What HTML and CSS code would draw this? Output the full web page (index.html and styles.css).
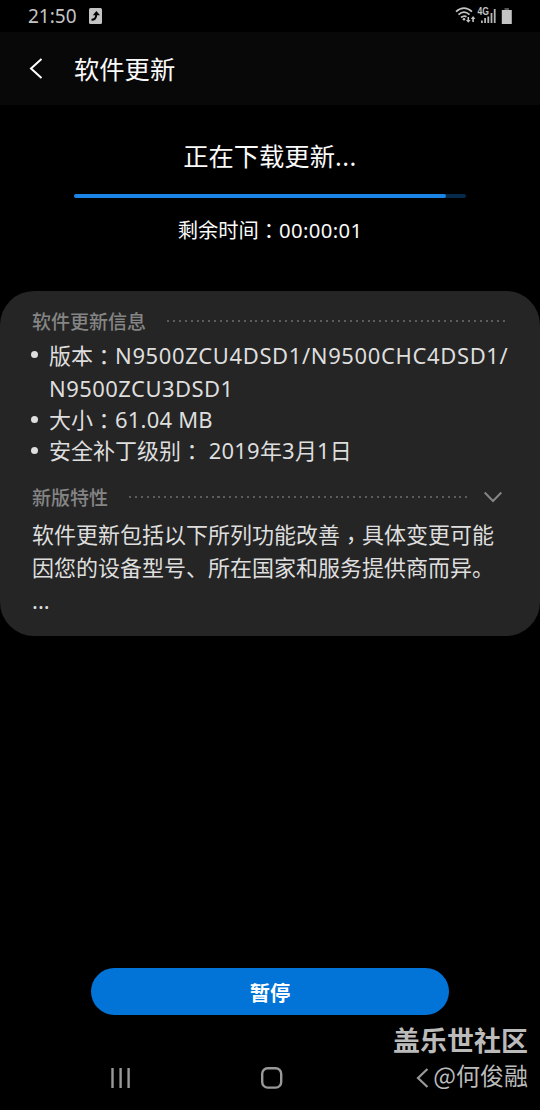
FILE: index.html
```html
<!DOCTYPE html>
<html lang="zh-CN">
<head>
  <meta charset="UTF-8">
  <meta name="viewport" content="width=device-width, initial-scale=1.0">
  <title>软件更新</title>
  <link rel="stylesheet" href="styles.css">
</head>
<body>
  <!-- Status Bar -->
  <div class="status-bar">
    <span class="clock">21:50</span>
    <svg class="update-icon" width="13" height="16" viewBox="0 0 13 16">
      <rect width="13" height="16" rx="1.5" fill="#c4c4c4"/>
      <path d="M2.5 11.8C5.5 11.8 7.2 10 7.2 6.5" fill="none" stroke="#000" stroke-width="2"/>
      <path d="M3.8 7.3L7.4 3L11 7.3Z" fill="#000"/>
    </svg>
    <svg class="signal-icons" width="58" height="20" viewBox="0 0 58 20">
      <g fill="none" stroke="#c4c4c4" stroke-width="1.7">
        <path d="M1 5.7Q9 -1.3 17 5.7"/>
        <path d="M3.5 8.7Q9 3.7 14.5 8.7"/>
        <path d="M6 11.5Q9 9 11.5 10.7"/>
      </g>
      <circle cx="9" cy="13.3" r="1.3" fill="#c4c4c4"/>
      <path d="M12.5 11h1.6v3h1.6L13.3 16.8L11 14h1.5zM17.3 16h1.6v-3h1.5L18.1 10L15.8 13h1.5z" fill="#c4c4c4"/>
      <text x="22.5" y="9.3" textLength="11.5" lengthAdjust="spacingAndGlyphs" class="network">4G</text>
      <path d="M26 14.5h1.8v2.5h-1.8zM29.2 12h1.8v5h-1.8zM32.4 10.5h1.8v6.5h-1.8zM35.6 7h1.8v10h-1.8zM38.8 3h1.8v14h-1.8z" fill="#b5b5b5"/>
      <path d="M49.5 2h4.5v2h-4.5z" fill="#555"/>
      <path d="M46.8 4h10v14h-10z" fill="#c4c4c4"/>
    </svg>
  </div>

  <!-- Header -->
  <header>
    <svg width="14" height="22" viewBox="0 0 14 22">
      <path d="M12.5 1L2 10.5L12.5 20" fill="none" stroke="#fff" stroke-width="2"/>
    </svg>
    <h1>软件更新</h1>
  </header>

  <!-- Download Progress -->
  <section class="download">
    <h2>正在下载更新<span class="ellipsis">...</span></h2>
    <div class="progress"><div class="bar" style="width: 95%"></div></div>
    <p>剩余时间<span class="mid" lang="zh-TW">：</span><span class="time">00:00:01</span></p>
  </section>

  <!-- Update Details -->
  <section class="details">
    <div class="heading">
      <h3>软件更新信息</h3>
      <span class="dots"></span>
    </div>
    <ul>
      <li class="version">版本<span class="mid" lang="zh-TW">：</span><span class="build">N9500ZCU4DSD1/N9500CHC4DSD1/</span><br><span class="base">N9500ZCU3DSD1</span></li>
      <li>大小<span class="mid" lang="zh-TW">：</span><span class="size">61.04 MB</span></li>
      <li>安全补丁级别<span class="mid" lang="zh-TW">：</span> <span class="size">2019年3月1日</span></li>
    </ul>
    <div class="heading features">
      <h3>新版特性</h3>
      <span class="dots"></span>
      <svg width="20" height="13" viewBox="0 0 20 13">
        <path d="M1.7 1.5L10 10L18.3 1.5" fill="none" stroke="#858585" stroke-width="2"/>
      </svg>
    </div>
    <p>软件更新包括以下所列功能改善<span class="mid" lang="zh-TW">，</span>具体变更可能<br>因您的设备型号、所在国家和服务提供商而异。</p>
    <p class="more">...</p>
  </section>

  <button type="button">暂停</button>

  <!-- Navigation Bar -->
  <nav>
    <svg width="20" height="22" viewBox="0 0 20 22">
      <path d="M1.5 1v20M9.6 1v20M17.6 1v20" stroke="#999" stroke-width="2.4"/>
    </svg>
    <svg class="home" width="22" height="22" viewBox="0 0 22 22">
      <rect x="1.2" y="1.2" width="19" height="19.4" rx="5.5" fill="none" stroke="#999" stroke-width="2.4"/>
    </svg>
    <svg width="13" height="22" viewBox="0 0 13 22">
      <path d="M11.5 2L2 11L11.5 20" fill="none" stroke="#999" stroke-width="2.2"/>
    </svg>
  </nav>

  <!-- Watermark -->
  <div class="watermark">
    <strong>盖乐世社区</strong>
    <span>@何俊融</span>
  </div>
</body>
</html>
```
FILE: styles.css
```css
/* Global Styles */
* { box-sizing: border-box; }
body {
  margin: 0;
  height: 1110px;
  display: flex;
  flex-direction: column;
  position: relative;
  overflow: hidden;
  background: #000;
  color: #fafafa;
  font-family: "Noto Sans", "Noto Sans CJK SC", sans-serif;
}
h1, h2, h3, p, ul { margin: 0; padding: 0; font-weight: 400; }
svg { display: block; flex: none; }
/* centred full-width punctuation */
.mid {
  font-family: "Noto Sans CJK TC", sans-serif;
  line-height: 0;
  vertical-align: -1px;
}

/* Status Bar */
.status-bar {
  height: 32px;
  flex: none;
  display: flex;
  align-items: center;
  padding: 0 27px 0 28px;
  color: #c4c4c4;
}
.clock { font-size: 19px; line-height: 32px; }
.update-icon { margin-left: 12px; }
.signal-icons { margin-left: auto; }
.network {
  font-family: "Liberation Sans", sans-serif;
  font-size: 10.5px;
  font-weight: 700;
  fill: #c4c4c4;
}

/* Header */
header {
  height: 73px;
  flex: none;
  display: flex;
  align-items: center;
  gap: 31px;
  padding-left: 29px;
  background: #080808;
}
header h1 { font-size: 25.3px; line-height: 36px; }

/* Download Progress */
.download {
  height: 186px;
  flex: none;
  padding: 33px 74px 0;
  text-align: center;
}
.download h2 { font-size: 25.3px; line-height: 36px; }
.ellipsis { letter-spacing: .5px; }
.progress {
  height: 4px;
  margin-top: 20px;
  border-radius: 2px;
  background: #07294a;
}
.bar {
  height: 100%;
  border-radius: 2px;
  background: #1b84e4;
}
.download p { margin-top: 17px; font-size: 20.3px; line-height: 30px; }
.time { letter-spacing: .35px; }

/* Update Details */
.details {
  height: 345px;
  flex: none;
  padding: 16px 32px 0;
  border-radius: 34px;
  background: #252525;
  color: #dedede;
  font-size: 22px;
  line-height: 31px;
}
.heading {
  height: 28px;
  display: flex;
  align-items: center;
  color: #858585;
}
.heading h3 { padding-top: 1px; font-size: 19px; line-height: 28px; font-weight: 500; }
.dots {
  flex: 1;
  height: 2px;
  margin-left: 21px;
  background: repeating-linear-gradient(90deg, #5c5c5c 0 2px, transparent 2px 5.9px);
}
.details ul { margin-top: 4px; list-style: none; }
.details li { position: relative; padding-left: 17px; white-space: nowrap; }
.details li::before {
  content: "";
  position: absolute;
  left: -1px;
  top: 12px;
  width: 7px;
  height: 7px;
  border-radius: 50%;
  background: #dedede;
}
.details .version { line-height: 32.5px; }
.build { letter-spacing: .63px; }
.base { letter-spacing: .45px; }
.size { letter-spacing: .2px; }
.features { margin-top: 17px; }
.features svg { margin: 0 5px 0 14px; }
.details p { margin-top: 7px; line-height: 33px; white-space: nowrap; }
.details p .mid { vertical-align: -5px; }
.details .more { margin-top: 0; }

/* Pause Button */
button {
  width: 358px;
  height: 47px;
  flex: none;
  margin: 332px 0 0 91px;
  padding: 0;
  border: none;
  border-radius: 24px;
  background: #0274d8;
  color: #fff;
  font: 700 20.3px "Noto Sans CJK SC", sans-serif;
}

/* Navigation Bar */
nav {
  display: flex;
  padding: 52px 0 0 111px;
}
.home { margin: 0 133px 0 130px; }

/* Watermark */
.watermark {
  position: absolute;
  right: 12px;
  bottom: 18px;
  display: flex;
  flex-direction: column;
  align-items: flex-end;
  color: #bbb;
  font-family: "Noto Sans CJK SC", sans-serif;
}
.watermark strong { font-size: 27px; line-height: 36px; }
.watermark span { font-size: 24px; line-height: 34px; }
```
